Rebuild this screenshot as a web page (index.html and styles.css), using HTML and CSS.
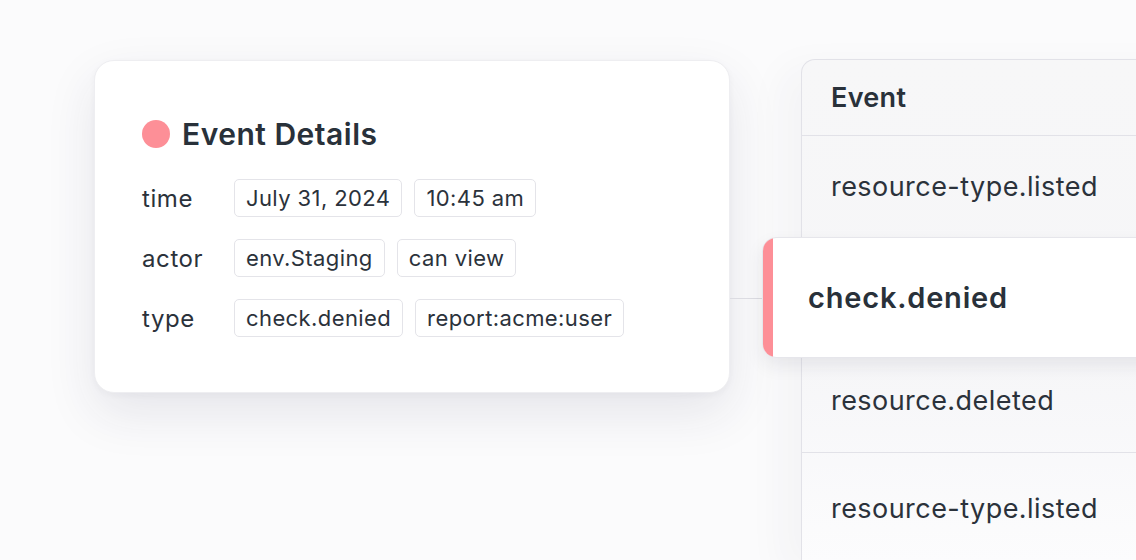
FILE: index.html
```html
<!DOCTYPE html>
<html>
<head>
<meta charset="utf-8">
<link rel="stylesheet" href="styles.css">
</head>
<body>
<div class="stage">
  <section class="details">
    <h2 class="details-title"><span class="dot"></span>Event Details</h2>
    <div class="field">
      <span class="label">time</span>
      <span class="tag">July 31, 2024</span>
      <span class="tag">10:45 am</span>
    </div>
    <div class="field">
      <span class="label">actor</span>
      <span class="tag">env.Staging</span>
      <span class="tag">can view</span>
    </div>
    <div class="field">
      <span class="label">type</span>
      <span class="tag">check.denied</span>
      <span class="tag">report:acme:user</span>
    </div>
  </section>
  <div class="connector"></div>
  <section class="events">
    <div class="events-head">Event</div>
    <div class="event-row row-first">resource-type.listed</div>
    <div class="event-selected">
      <span class="selected-bar"></span>
      <span class="selected-text">check.denied</span>
    </div>
    <div class="event-row row-third">resource.deleted</div>
    <div class="event-row row-last">resource-type.listed</div>
  </section>
</div>
</body>
</html>
```

FILE: styles.css
```css
html, body {
  margin: 0;
  padding: 0;
  height: 100%;
  overflow: hidden;
}

body {
  background: #fbfbfc;
  color: #29313a;
  font-family: Inter, "Liberation Sans", sans-serif;
}

.stage {
  display: flex;
  align-items: flex-start;
  width: 1136px;
  height: 560px;
  overflow: hidden;
}

.details {
  flex: none;
  width: 636px;
  height: 333px;
  box-sizing: border-box;
  margin: 60px 0 0 94px;
  padding: 55px 47px 0 47px;
  background: #ffffff;
  border: 1px solid #eeeef1;
  border-radius: 20px;
  box-shadow: 0 20px 50px rgba(40, 40, 80, 0.10), 0 2px 6px rgba(40, 40, 70, 0.04);
}

.details-title {
  display: flex;
  align-items: center;
  gap: 12px;
  margin: 0 0 27px 0;
  font-size: 30px;
  font-weight: 600;
  letter-spacing: 0.5px;
  line-height: 36px;
}

.dot {
  width: 28px;
  height: 28px;
  border-radius: 50%;
  background: #fd8f97;
}

.field {
  display: flex;
  align-items: center;
  gap: 12px;
  margin-bottom: 22px;
}

.label {
  width: 80px;
  font-size: 24px;
  letter-spacing: 0.6px;
  color: #2b323b;
}

.tag {
  height: 38px;
  box-sizing: border-box;
  padding: 0 11px;
  display: flex;
  align-items: center;
  border: 1.5px solid #e4e4e9;
  border-radius: 5px;
  font-size: 22px;
  letter-spacing: 0.4px;
  color: #2b323b;
}

.connector {
  flex: none;
  width: 32px;
  height: 1px;
  margin-top: 298px;
  background: #dcdce2;
}

.events {
  flex: none;
  width: 420px;
  margin: 59px 0 0 39px;
  display: flex;
  flex-direction: column;
  background: linear-gradient(#f7f7f8 0%, #f6f6f8 60%, #fcfcfd 100%);
  border-top: 1px solid #e2e2e8;
  border-left: 1px solid #e2e2e8;
  border-top-left-radius: 14px;
  box-shadow: -18px 10px 40px rgba(40, 40, 70, 0.04);
}

.events-head {
  height: 75px;
  display: flex;
  align-items: center;
  padding-left: 29px;
  font-size: 27px;
  font-weight: 600;
  letter-spacing: 0.3px;
  border-bottom: 1.5px solid #e2e2e8;
}

.event-row {
  display: flex;
  align-items: center;
  padding-left: 29px;
  font-size: 27px;
  letter-spacing: 0.45px;
  color: #2b323b;
}

.row-first {
  height: 101px;
}

.row-third {
  height: 95px;
  padding-bottom: 10px;
  box-sizing: border-box;
  border-bottom: 1.5px solid #e2e2e8;
}

.row-last {
  height: 110px;
}

.event-selected {
  height: 121px;
  box-sizing: border-box;
  margin-left: -40px;
  display: flex;
  align-items: center;
  background: #ffffff;
  border: 1.5px solid #e6e6eb;
  border-radius: 14px;
  overflow: hidden;
  box-shadow: 0 8px 18px rgba(40, 40, 70, 0.08);
}

.selected-bar {
  align-self: stretch;
  width: 10px;
  background: #fd8f97;
}

.selected-text {
  padding-left: 35px;
  font-size: 29px;
  font-weight: 600;
  letter-spacing: 0.8px;
}
```
